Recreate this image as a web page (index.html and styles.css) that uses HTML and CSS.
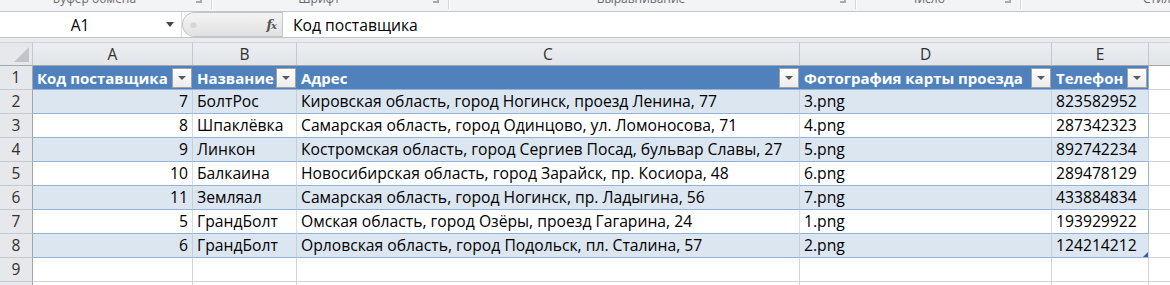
FILE: index.html
```html
<!DOCTYPE html>
<html lang="ru">
<head>
<meta charset="utf-8">
<link rel="stylesheet" href="styles.css">
</head>
<body>
<div class="ribbon">
  <div class="grp g1"><span class="glabel">Буфер обмена</span><span class="launch"></span></div>
  <div class="grp g2"><span class="glabel">Шрифт</span><span class="launch"></span></div>
  <div class="grp g3"><span class="glabel">Выравнивание</span><span class="launch"></span></div>
  <div class="grp g4"><span class="glabel">Число</span><span class="launch"></span></div>
  <div class="grp g5"><span class="glabel">Стили</span></div>
</div>
<div class="fbar">
  <div class="namebox"><span class="nbtext">A1</span><span class="nbarrow"></span></div>
  <div class="pill"><span class="dot"></span><span class="fx"><i>f</i><i class="x">x</i></span></div>
  <div class="finput">Код поставщика</div>
</div>
<div class="gap"></div>
<div class="sheet">
  <div class="corner"><span class="tri"></span></div>
  <div class="ch">A</div><div class="ch">B</div><div class="ch">C</div><div class="ch">D</div><div class="ch">E</div><div class="ch last"></div>

  <div class="rh">1</div>
  <div class="th"><span>Код поставщика</span><span class="fb"></span></div>
  <div class="th"><span>Название</span><span class="fb"></span></div>
  <div class="th"><span>Адрес</span><span class="fb"></span></div>
  <div class="th"><span>Фотография карты проезда</span><span class="fb"></span></div>
  <div class="th thlast"><span>Телефон</span><span class="fb"></span></div>
  <div class="c out"></div>

  <div class="rh">2</div>
  <div class="c t band num">7</div><div class="c t band">БолтРос</div><div class="c t band">Кировская область, город Ногинск, проезд Ленина, 77</div><div class="c t band">3.png</div><div class="c t band tr">823582952</div><div class="c out"></div>

  <div class="rh">3</div>
  <div class="c t num">8</div><div class="c t">Шпаклёвка</div><div class="c t">Самарская область, город Одинцово, ул. Ломоносова, 71</div><div class="c t">4.png</div><div class="c t tr">287342323</div><div class="c out"></div>

  <div class="rh">4</div>
  <div class="c t band num">9</div><div class="c t band">Линкон</div><div class="c t band">Костромская область, город Сергиев Посад, бульвар Славы, 27</div><div class="c t band">5.png</div><div class="c t band tr">892742234</div><div class="c out"></div>

  <div class="rh">5</div>
  <div class="c t num">10</div><div class="c t">Балкаина</div><div class="c t">Новосибирская область, город Зарайск, пр. Косиора, 48</div><div class="c t">6.png</div><div class="c t tr">289478129</div><div class="c out"></div>

  <div class="rh">6</div>
  <div class="c t band num">11</div><div class="c t band">Земляал</div><div class="c t band">Самарская область, город Ногинск, пр. Ладыгина, 56</div><div class="c t band">7.png</div><div class="c t band tr">433884834</div><div class="c out"></div>

  <div class="rh">7</div>
  <div class="c t num">5</div><div class="c t">ГрандБолт</div><div class="c t">Омская область, город Озёры, проезд Гагарина, 24</div><div class="c t">1.png</div><div class="c t tr">193929922</div><div class="c out"></div>

  <div class="rh">8</div>
  <div class="c t band num">6</div><div class="c t band">ГрандБолт</div><div class="c t band">Орловская область, город Подольск, пл. Сталина, 57</div><div class="c t band">2.png</div><div class="c t band tr lastcell">124214212<span class="handle"></span></div><div class="c out"></div>

  <div class="rh">9</div>
  <div class="c"></div><div class="c"></div><div class="c"></div><div class="c"></div><div class="c"></div><div class="c out"></div>

  <div class="rh"></div>
  <div class="c"></div><div class="c"></div><div class="c"></div><div class="c"></div><div class="c"></div><div class="c out"></div>
</div>
</body>
</html>
```

FILE: styles.css
```css
* { box-sizing: border-box; }
html, body { margin: 0; padding: 0; }
body {
  width: 1170px;
  height: 285px;
  overflow: hidden;
  background: #ffffff;
  font-family: "Open Sans", "Noto Sans", sans-serif;
  color: #000;
}

/* ribbon strip (clipped group labels) */
.ribbon {
  display: flex;
  height: 12px;
  background: #f3f4f6;
  border-bottom: 1px solid #c3c7cd;
  overflow: hidden;
}
.grp {
  position: relative;
  display: flex;
  align-items: flex-start;
  height: 9px;
  border-right: 1px solid #d3d6da;
  box-shadow: 1px 0 0 #ffffff;
  padding-right: 22px;
  overflow: hidden;
}
.g1 { width: 212px; }
.g2 { width: 237px; }
.g3 { width: 407px; }
.g4 { width: 165px; }
.g5 { flex: 1; border-right: none; box-shadow: none; padding-right: 0; padding-left: 122px; }
.glabel {
  flex: 1;
  text-align: center;
  font-family: "Open Sans", sans-serif;
  font-size: 12px;
  line-height: 12px;
  margin-top: -7px;
  color: #6a6a6a;
  white-space: nowrap;
}
.g5 .glabel { text-align: left; }
.launch {
  position: absolute;
  right: 9px;
  top: 0;
  width: 6px;
  height: 3px;
  border-right: 2px solid #a9a9a9;
  border-bottom: 2px solid #a9a9a9;
}

/* formula bar */
.fbar {
  display: flex;
  height: 26px;
  border-bottom: 1px solid #c3c7cd;
  background: #fff;
}
.namebox {
  width: 182px;
  display: flex;
  align-items: center;
  background: #fff;
  border-right: 1px solid #dcdcdc;
}
.nbtext {
  width: 160px;
  text-align: center;
  font-size: 15.5px;
}
.nbarrow {
  margin-left: 6px;
  width: 0;
  height: 0;
  border-left: 4px solid transparent;
  border-right: 4px solid transparent;
  border-top: 5px solid #444;
}
.pill {
  width: 100px;
  display: flex;
  align-items: center;
  justify-content: space-between;
  padding: 0 6px 0 7px;
  background: linear-gradient(#f4f4f4, #e1e1e1);
  border: 1px solid #c4c4c4;
  border-right: none;
  border-radius: 13px 0 0 13px;
}
.dot {
  width: 7px;
  height: 7px;
  border-radius: 50%;
  background: #d6d6d6;
  box-shadow: inset 0 1px 1px #f8f8f8;
}
.fx {
  font-family: "DejaVu Serif", serif;
  font-size: 13px;
  color: #555;
  font-weight: bold;
  letter-spacing: -1px;
}
.fx .x { font-size: 10px; }
.finput {
  flex: 1;
  display: flex;
  align-items: center;
  padding-left: 10px;
  font-size: 15.7px;
  border-left: 1px solid #c4c4c4;
}
.gap {
  height: 4px;
  background: #e9ebee;
}

/* sheet grid */
.sheet {
  display: grid;
  grid-template-columns: 33px 160px 104px 503px 252px 97px 21px;
  grid-auto-rows: 24px;
  font-size: 15.7px;
}
.corner {
  background: #e6e8eb;
  border-right: 1px solid #c4c9cf;
  border-bottom: 1px solid #9fa6ae;
  border-top: 1px solid #d0d4d9;
  display: flex;
  align-items: flex-end;
  justify-content: flex-end;
  padding: 0 3px 3px 0;
}
.tri {
  width: 0;
  height: 0;
  border-left: 15px solid transparent;
  border-bottom: 15px solid #c1c5ca;
}
.ch {
  background: linear-gradient(#eceef1, #e2e5e9);
  border-right: 1px solid #c4c9cf;
  border-bottom: 1px solid #9fa6ae;
  border-top: 1px solid #d0d4d9;
  text-align: center;
  line-height: 22px;
  font-size: 15.5px;
  color: #303030;
}
.ch.last { border-right: none; }
.rh {
  background: #e6e8eb;
  border-right: 1px solid #9fa6ae;
  border-bottom: 1px solid #c4c9cf;
  text-align: center;
  line-height: 23px;
  font-size: 15.5px;
  color: #303030;
}
.th {
  background: #4f81bd;
  color: #fff;
  font-weight: bold;
  font-size: 15px;
  display: flex;
  align-items: center;
  justify-content: space-between;
  padding-left: 4px;
  padding-right: 1px;
  border-bottom: 1px solid #95b3d7;
  white-space: nowrap;
}
.thlast { border-right: 1px solid #95b3d7; }
.fb {
  width: 20px;
  height: 20px;
  flex: none;
  border: 1px solid #a3a3a3;
  background: linear-gradient(#ffffff, #ececec);
  display: flex;
  align-items: center;
  justify-content: center;
}
.fb::after {
  content: "";
  width: 0;
  height: 0;
  border-left: 4px solid transparent;
  border-right: 4px solid transparent;
  border-top: 4px solid #5a5a5a;
}
.c {
  border-right: 1px solid #d4d4d4;
  border-bottom: 1px solid #d4d4d4;
  padding: 0 4px;
  line-height: 23px;
  white-space: nowrap;
  overflow: hidden;
}
.c.out { border-right: none; }
.c.t {
  border-bottom-color: #95b3d7;
  border-right-color: #d5dde8;
}
.c.band { background: #dce6f1; }
.c.band.t { border-right-color: #c5d0dd; }
.c.tr { border-right-color: #95b3d7; }
.c.num { text-align: right; }
.lastcell {
  position: relative;
  overflow: visible;
}
.handle {
  position: absolute;
  right: 0;
  bottom: 0;
  width: 0;
  height: 0;
  border-left: 5px solid transparent;
  border-bottom: 5px solid #3e5ba8;
}
```
